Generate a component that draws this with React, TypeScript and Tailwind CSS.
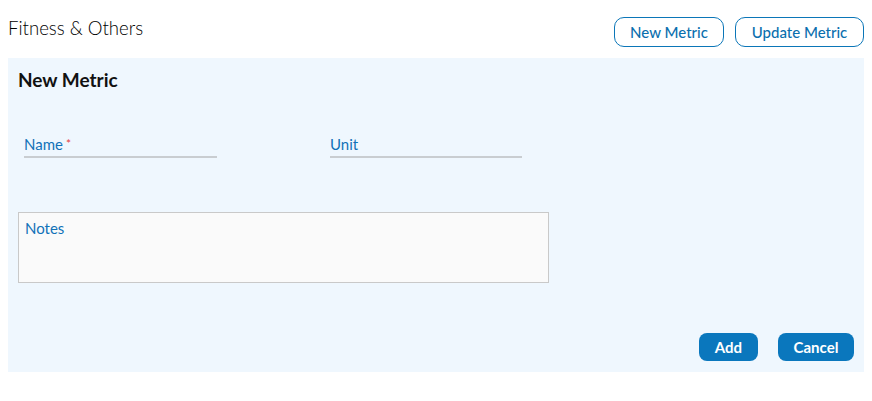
import React from 'react';

export default function App() {
    return (
        <div className="w-[872px] h-[401px] bg-white px-2 font-['Lato','Noto_Sans',sans-serif]">
            <div className="flex items-start justify-between pt-[17px] h-[58px]">
                <h1 className="text-[18.6px] font-light text-[#000] leading-none mt-[2px]">Fitness &amp; Others</h1>
                <div className="flex gap-[11px]">
                    <button className="h-[30px] w-[110px] rounded-[10px] border border-[#0b76b8] text-[#0b6fae] text-[15px] font-medium">New Metric</button>
                    <button className="h-[30px] w-[129px] rounded-[10px] border border-[#0b76b8] text-[#0b6fae] text-[15px] font-medium">Update Metric</button>
                </div>
            </div>

            <div className="bg-[#eff7fe] h-[314px] px-[10px] pt-[11px] flex flex-col">
                <h2 className="text-[19px] font-bold text-[#111] leading-[22px]">New Metric</h2>

                <div className="flex gap-[113px] pl-[6px] mt-[44px]">
                    <div className="w-[193px] border-b-2 border-[#c9cdd1] pb-[3px] leading-[18px]">
                        <span className="text-[15px] text-[#1172b8]">Name</span>
                        <span className="text-[#e64040] text-[12px] align-top ml-[3px]">*</span>
                    </div>
                    <div className="w-[192px] border-b-2 border-[#c9cdd1] pb-[3px] leading-[18px]">
                        <span className="text-[15px] text-[#1172b8]">Unit</span>
                    </div>
                </div>

                <div className="mt-[54px] w-[531px] h-[71px] bg-[#fafafa] border border-[#c9c9c9] px-[6px] pt-[6px] leading-[18px]">
                    <span className="text-[15px] text-[#1172b8]">Notes</span>
                </div>

                <div className="flex justify-end gap-[20px] mt-auto mb-[11px]">
                    <button className="h-[28px] w-[59px] rounded-[8px] bg-[#0a77bd] text-white text-[15px] font-bold">Add</button>
                    <button className="h-[28px] w-[76px] rounded-[8px] bg-[#0a77bd] text-white text-[15px] font-bold">Cancel</button>
                </div>
            </div>
        </div>
    );
}
